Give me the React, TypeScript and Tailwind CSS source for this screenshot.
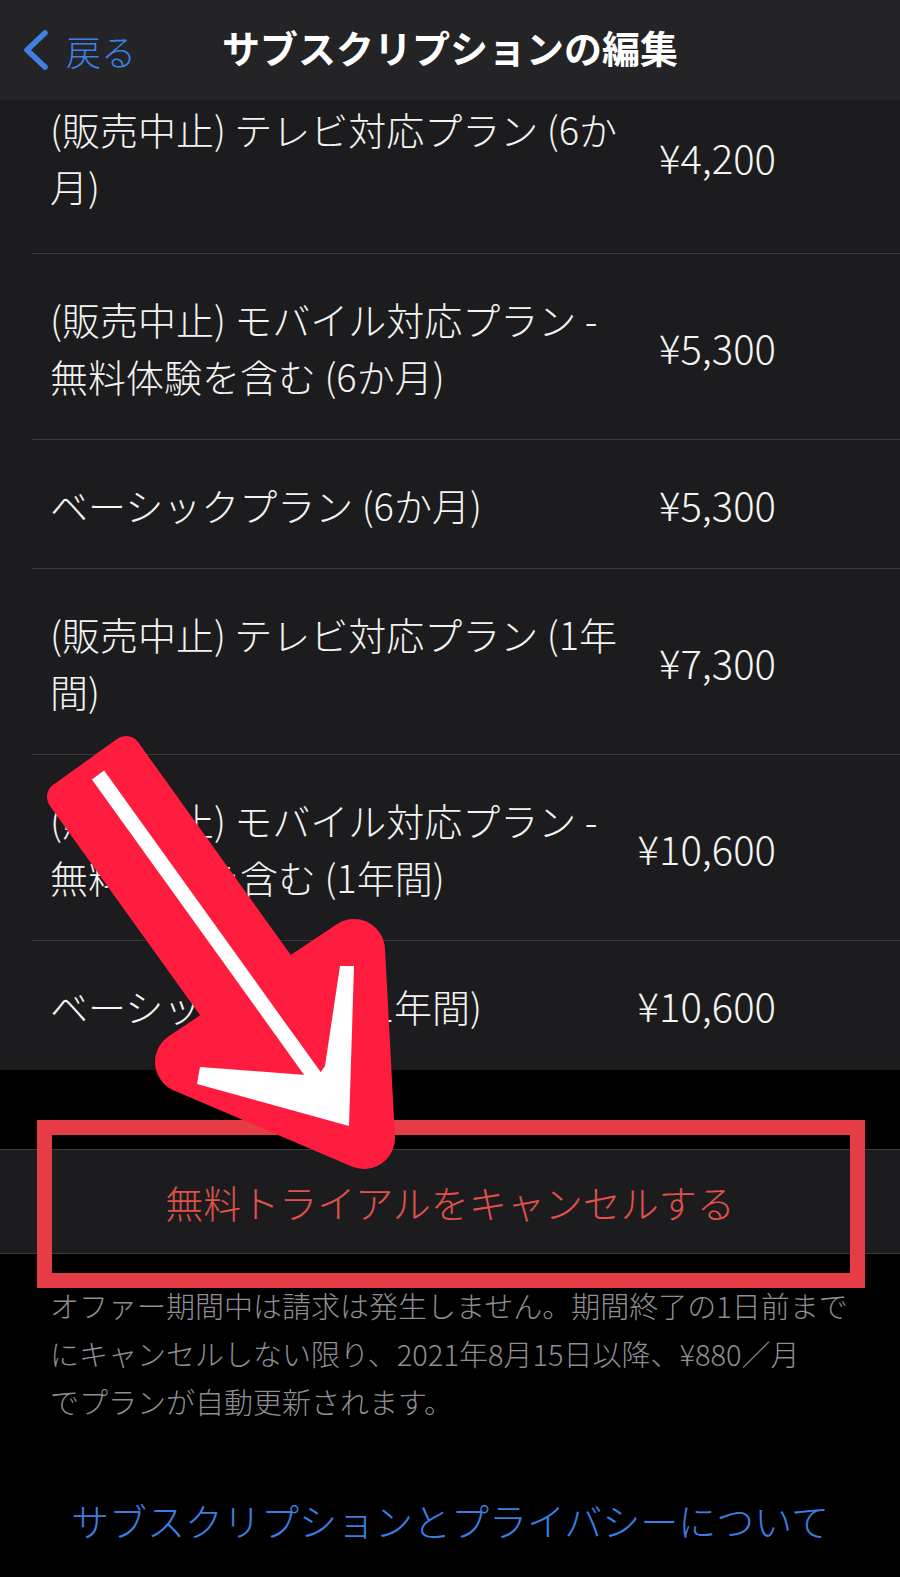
import React from "react";

type Plan = {
  lines: string[];
  price: string;
};

const plans: Plan[] = [
  { lines: ["(販売中止) テレビ対応プラン (6か", "月)"], price: "¥4,200" },
  { lines: ["(販売中止) モバイル対応プラン -", "無料体験を含む (6か月)"], price: "¥5,300" },
  { lines: ["ベーシックプラン (6か月)"], price: "¥5,300" },
  { lines: ["(販売中止) テレビ対応プラン (1年", "間)"], price: "¥7,300" },
  { lines: ["(販売中止) モバイル対応プラン -", "無料体験を含む (1年間)"], price: "¥10,600" },
  { lines: ["ベーシックプラン (1年間)"], price: "¥10,600" },
];

function PlanRow({ plan, first, last }: { plan: Plan; first: boolean; last: boolean }) {
  // 1行目はヘッダーの下に少し隠れている（スクロール済み）
  const pad = first ? "pt-[0px] pb-[39px]" : last ? "pt-[36px] pb-[36px]" : "pt-[36px] pb-[35px]";
  return (
    <div className="pl-[32px]">
      <div
        className={`flex items-center justify-between pl-[18px] pr-[124px] ${pad} ${
          last ? "" : "border-b border-[#38383a]"
        }`}
      >
        <div className="whitespace-nowrap text-[38px] font-light leading-[57px] text-[#f4f4f4]">
          {plan.lines.map((l, i) => (
            <div key={i}>{l}</div>
          ))}
        </div>
        <div className="whitespace-nowrap text-[40px] font-light leading-[57px] text-[#f4f4f4]">
          {plan.price}
        </div>
      </div>
    </div>
  );
}

export default function App() {
  return (
    <div className="relative min-h-[1577px] w-[900px] overflow-hidden bg-black font-['Noto_Sans_CJK_JP','Noto_Sans',sans-serif] text-white">
      {/* ナビゲーションバー */}
      <header className="grid h-[100px] grid-cols-[1fr_auto_1fr] items-center bg-[#242426]">
        <div className="flex items-center gap-[16px] pl-[20px] text-[#3f80e4]">
          <svg width="30" height="40" viewBox="0 0 30 40" fill="none">
            <path
              d="M25 3 L7 20 L25 37"
              stroke="currentColor"
              strokeWidth="5.5"
              strokeLinecap="round"
              strokeLinejoin="round"
            />
          </svg>
          <span className="text-[35px] font-light leading-none">戻る</span>
        </div>
        <h1 className="pb-[6px] text-[38px] font-bold leading-none">サブスクリプションの編集</h1>
        <div />
      </header>

      {/* プラン一覧 */}
      <section className="bg-[#1c1c1e]">
        {plans.map((p, i) => (
          <PlanRow key={i} plan={p} first={i === 0} last={i === plans.length - 1} />
        ))}
      </section>

      <div className="mt-[79px] flex h-[105px] items-center justify-center border-y border-[#3a3a3c] bg-[#1c1c1e] text-[38px] font-light text-[#e0524a]">
        無料トライアルをキャンセルする
      </div>

      <p className="whitespace-nowrap px-[50px] pt-[27px] text-[29px] font-light leading-[48px] text-[#8e8e93]">
        オファー期間中は請求は発生しません。期間終了の1日前まで
        <br />
        にキャンセルしない限り、2021年8月15日以降、¥880／月
        <br />
        でプランが自動更新されます。
      </p>

      <div className="mt-[66px] text-center text-[38px] font-light leading-[57px] text-[#3b7fe2]">
        サブスクリプションとプライバシーについて
      </div>

      {/* 注釈（赤枠と矢印） */}
      <svg
        className="pointer-events-none absolute inset-0"
        width="900"
        height="1577"
        viewBox="0 0 900 1577"
      >
        <rect x="44.5" y="1127.5" width="813" height="153" fill="none" stroke="#e63c45" strokeWidth="15" />
        <polygon
          points="126,751 62,797 232,1034 296,988"
          fill="#ff1d3f"
          stroke="#ff1d3f"
          strokeWidth="30"
          strokeLinejoin="round"
        />
        <polygon
          points="186,1062 354,950 364,1138"
          fill="#ff1d3f"
          stroke="#ff1d3f"
          strokeWidth="62"
          strokeLinejoin="round"
        />
        <line x1="98" y1="775" x2="330" y2="1098" stroke="#ffffff" strokeWidth="15" />
        <polygon
          points="340,966 354,966 349,1126 197,1084 200,1067 318,1076 325,1066"
          fill="#ffffff"
        />
      </svg>
    </div>
  );
}
